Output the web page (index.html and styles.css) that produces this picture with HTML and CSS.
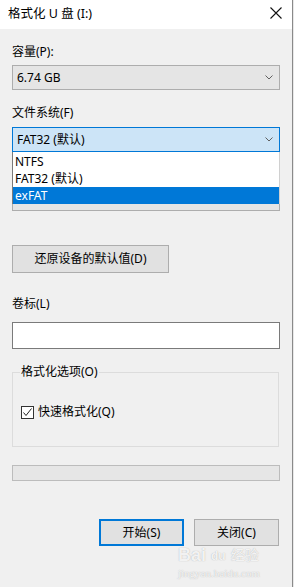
FILE: index.html
```html
<!DOCTYPE html>
<html lang="zh-CN">
<head>
<meta charset="utf-8">
<title>格式化 U 盘 (I:)</title>
<link rel="stylesheet" href="styles.css">
</head>
<body>
<div class="window">
  <div class="titlebar">
    <span class="title">格式化 U 盘 (I:)</span>
    <svg class="close" width="12" height="12" viewBox="0 0 12 12"><path d="M0.5 0.5L11.5 11.5M11.5 0.5L0.5 11.5" stroke="#111" stroke-width="1.1" fill="none"/></svg>
  </div>
  <div class="content">
    <div class="label">容量(P):</div>
    <div class="combo"><span>6.74 GB</span><svg class="chev" width="8" height="5" viewBox="0 0 8 5"><path d="M0.5 0.5L4 4L7.5 0.5" stroke="#606060" fill="none"/></svg></div>

    <div class="label l2">文件系统(F)</div>
    <div class="fs-wrap">
      <div class="combo focused"><span>FAT32 (默认)</span><svg class="chev" width="8" height="5" viewBox="0 0 8 5"><path d="M0.5 0.5L4 4L7.5 0.5" stroke="#606060" fill="none"/></svg></div>
      <div class="label l3"></div>
      <div class="combo c3"></div>
      <ul class="dropdown">
        <li>NTFS</li>
        <li>FAT32 (默认)</li>
        <li class="sel">exFAT</li>
      </ul>
    </div>

    <button class="btn restore">还原设备的默认值(D)</button>

    <div class="label l4">卷标(L)</div>
    <div class="textbox"></div>

    <div class="group">
      <span class="legend">格式化选项(O)</span>
      <label class="check">
        <span class="box"><svg width="11" height="11" viewBox="0 0 11 11"><path d="M1.5 5.5L4 8.5L9.5 1.5" stroke="#222" stroke-width="1" fill="none"/></svg></span>
        <span>快速格式化(Q)</span>
      </label>
    </div>

    <div class="progress"></div>

    <div class="actions">
      <button class="btn primary">开始(S)</button>
      <button class="btn">关闭(C)</button>
    </div>
  </div>
  <div class="watermark">
    <div class="wm-top"><span class="wm-bai">Bai</span><span class="wm-paw">du</span><span class="wm-jy">经验</span></div>
    <div class="wm-url">jingyan.baidu.com</div>
  </div>
</div>
</body>
</html>
```

FILE: styles.css
```css
* { box-sizing: border-box; }
html, body { margin: 0; padding: 0; }
body {
  background: #e8e8e8;
  font-family: "Noto Sans", "Noto Sans CJK SC", sans-serif;
  font-size: 12px;
  color: #000;
  width: 294px;
  height: 587px;
  overflow: hidden;
}
.window {
  position: relative;
  width: 293px;
  height: 587px;
  background: #f0f0f0;
  border-right: 1px solid #8a8a8a;
}
.titlebar {
  height: 29px;
  background: #fff;
  display: flex;
  align-items: center;
  justify-content: space-between;
  padding: 0 10px 1px 8px;
}
.title { font-size: 12.5px; line-height: 16px; }
.close { margin-top: -2px; }
.content {
  padding: 15px 12px 0 12px;
}
.label { line-height: 16px; height: 16px; }
.combo {
  height: 25px;
  margin-top: 5px;
  background: #e5e5e5;
  border: 1px solid #adadad;
  display: flex;
  align-items: center;
  justify-content: space-between;
  padding: 0 6px 0 4px;
  line-height: 16px;
}
.chev { display: block; }
.l2 { margin-top: 15px; }
.fs-wrap { position: relative; margin-top: 6px; }
.fs-wrap .focused {
  margin-top: 0;
  background: #cce4f7;
  border-color: #0078d7;
}
.l3 { margin-top: 12px; }
.c3 { margin-top: 6px; }
.dropdown {
  position: absolute;
  left: 0;
  top: 25px;
  width: 268px;
  margin: 0;
  padding: 1px 0 0 0;
  list-style: none;
  background: #fff;
  border-left: 1px solid #7a7a7a;
  border-right: 1px solid #d0d0d0;
}
.dropdown li {
  height: 17px;
  line-height: 17px;
  padding-left: 2px;
}
.dropdown li.sel { background: #0078d7; color: #fff; }
.btn {
  font: inherit;
  color: #000;
  background: #e1e1e1;
  border: 1px solid #adadad;
  height: 27px;
  padding: 0;
  line-height: 16px;
}
.restore {
  display: block;
  margin-top: 34px;
  width: 157px;
  height: 28px;
}
.l4 { margin-top: 23px; }
.textbox {
  margin-top: 10px;
  height: 27px;
  background: #fff;
  border: 1px solid #7a7a7a;
}
.group {
  margin-top: 23px;
  height: 75px;
  width: 267px;
  border: 1px solid #dcdcdc;
}
.legend {
  display: inline-block;
  margin: -9px 0 0 7px;
  padding: 0 1px;
  background: #f0f0f0;
  line-height: 16px;
  vertical-align: top;
}
.check {
  display: flex;
  align-items: center;
  gap: 4px;
  margin: 14px 0 0 8px;
  line-height: 16px;
}
.box {
  width: 13px;
  height: 13px;
  border: 1px solid #333;
  background: #fff;
  display: flex;
  align-items: center;
  justify-content: center;
}
.box svg { display: block; }
.progress {
  margin-top: 18px;
  height: 16px;
  background: #e6e6e6;
  border: 1px solid #bcbcbc;
}
.actions {
  margin-top: 38px;
  display: flex;
  justify-content: flex-end;
  gap: 10px;
  padding-right: 1px;
}
.actions .btn { width: 85px; }
.primary { border: 2px solid #0078d7; }
.watermark {
  position: absolute;
  left: 178px;
  top: 546px;
  color: rgba(255,255,255,0.85);
  text-shadow: 0 0 1px rgba(120,120,120,0.6);
  pointer-events: none;
}
.wm-top { display: flex; align-items: flex-end; gap: 2px; height: 18px; }
.wm-bai { font-family: "Liberation Sans", sans-serif; font-weight: bold; font-size: 18px; line-height: 18px; }
.wm-paw { font-family: "Liberation Sans", sans-serif; font-weight: bold; font-size: 12px; line-height: 16px; padding: 0 3px; }
.wm-jy { font-size: 14px; line-height: 18px; }
.wm-url { font-family: "Liberation Serif", serif; font-size: 11px; line-height: 14px; margin-top: 2px; }
```
